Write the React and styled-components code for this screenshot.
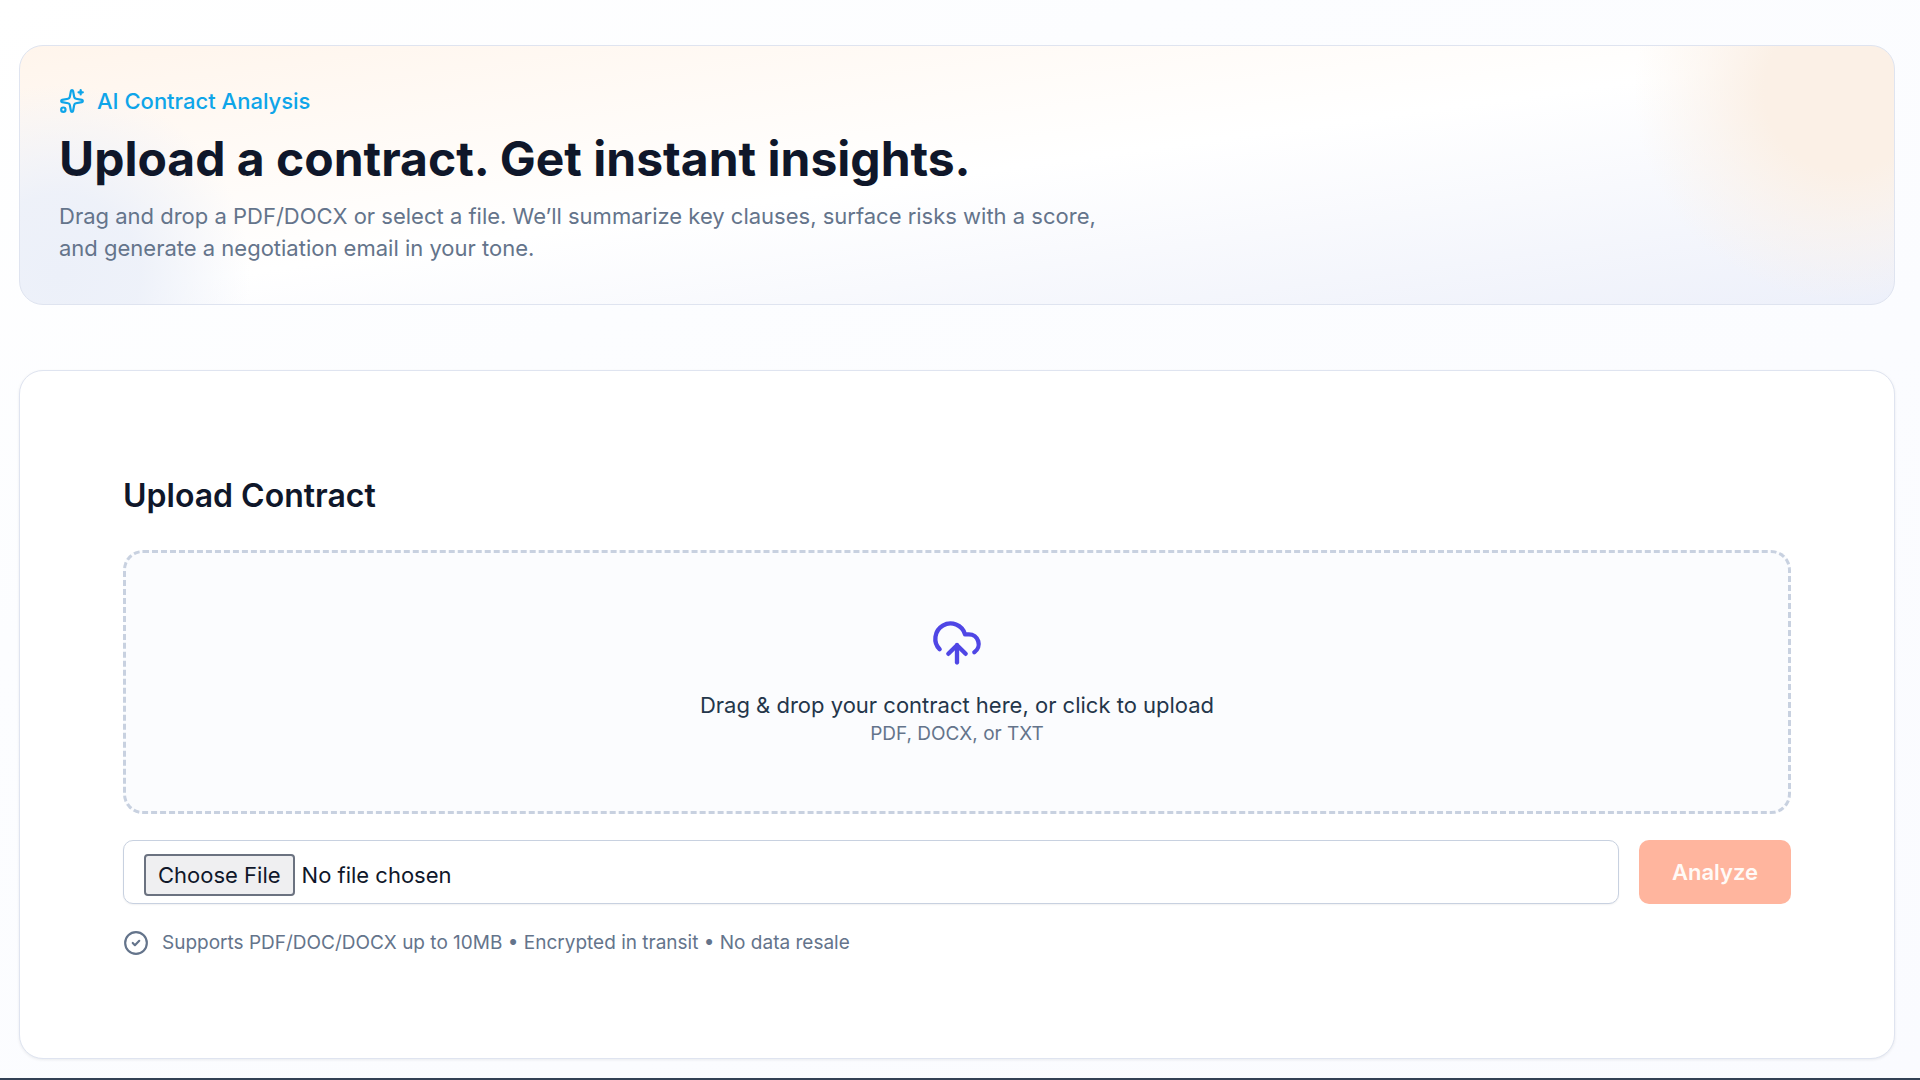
import React, { useState } from 'react'
import styled, { createGlobalStyle } from 'styled-components'
import { CircleCheck, CloudUpload, Sparkles } from 'lucide-react'

const GlobalStyle = createGlobalStyle`
	*, *::before, *::after {
		box-sizing: border-box;
	}

	body {
		margin: 0;
		color: #0f172a;
		font-family: Inter, 'Liberation Sans', sans-serif;
		background: #fcfdff;
	}

	h1, h2, p {
		margin: 0;
	}
`
const Page = styled.div`
	min-height: 100vh;
	display: flex;
	flex-direction: column;
	background: linear-gradient(to bottom right, #ffffff, #fcfdff 30%, #fafbff);
`
const Main = styled.main`
	flex: 1;
	display: flex;
	flex-direction: column;
	gap: 65px;
	padding: 45px 25px 19px 19px;
`
const Hero = styled.section`
	padding: 39px 39px 40px;
	border: 1px solid #dfe4f0;
	border-radius: 24px;
	background:
		radial-gradient(
			circle at calc(100% - 50px) 45px,
			#fbf0e6 0,
			#fbf0e6 80px,
			rgba(251, 240, 230, 0.5) 140px,
			rgba(251, 240, 230, 0) 210px
		),
		radial-gradient(
			circle at 40px calc(100% - 30px),
			#ecf0f9 0,
			rgba(236, 240, 249, 0.9) 80px,
			rgba(236, 240, 249, 0) 190px
		),
		linear-gradient(to bottom right, #fff5ec, #ffffff 50%, #edf0fa);
`
const Eyebrow = styled.p`
	display: flex;
	align-items: center;
	gap: 12px;
	color: #0ea5e9;
	font-size: 22px;
	font-weight: 500;
	line-height: 32px;
`
const Title = styled.h1`
	margin: 16px 0 15px;
	font-size: 48px;
	font-weight: 700;
	line-height: 52px;
`
const Lead = styled.p`
	max-width: 1070px;
	color: #64748b;
	font-size: 22px;
	line-height: 32px;
`
const Card = styled.section`
	padding: 102px 103px;
	border: 1px solid #dfe4f0;
	border-radius: 24px;
	background: #ffffff;
	box-shadow: 0 1px 3px rgba(15, 23, 42, 0.08);
`
const CardTitle = styled.h2`
	margin-bottom: 31px;
	font-size: 32px;
	font-weight: 600;
	line-height: 46px;
`
const DropZone = styled.button`
	width: 100%;
	height: 264px;
	display: flex;
	flex-direction: column;
	align-items: center;
	justify-content: center;
	padding: 0;
	border: 3px dashed #c8d1e0;
	border-radius: 20px;
	background: #fbfcfe;
	color: #24364a;
	font-family: inherit;
	cursor: pointer;

	svg {
		color: #4f46e5;
		margin-bottom: 20px;
	}
`
const DropText = styled.span`
	font-size: 22px;
	line-height: 32px;
`
const DropHint = styled.span`
	color: #64748b;
	font-size: 19px;
	line-height: 26px;
`
const UploadRow = styled.form`
	display: flex;
	gap: 20px;
	margin: 26px 0;
`
const FileInput = styled.input`
	flex: 1;
	min-width: 0;
	height: 64px;
	padding: 13px 20px;
	border: 1px solid #c8d1e0;
	border-radius: 10px;
	background: #ffffff;
	box-shadow: 0 1px 2px rgba(15, 23, 42, 0.06);
	color: #0f172a;
	font-family: inherit;
	font-size: 22px;

	&::file-selector-button {
		height: 42px;
		margin: 0 7px 0 0;
		padding: 0 12px;
		border: 2px solid #6b7280;
		border-radius: 4px;
		background: #efeff1;
		color: #0f172a;
		font-family: inherit;
		font-size: 22px;
	}
`
const AnalyzeButton = styled.button`
	height: 64px;
	padding: 0 33px;
	border: 0;
	border-radius: 10px;
	background: #ffb59e;
	color: #fffaf7;
	font-family: inherit;
	font-size: 22px;
	font-weight: 600;
`
const Note = styled.p`
	display: flex;
	align-items: center;
	gap: 13px;
	color: #64748b;
	font-size: 19px;
	line-height: 26px;
`
const Footer = styled.footer`
	height: 2px;
	background: #334155;
`

const App = () => {
	const [file, setFile] = useState(null)

	const openPicker = () => document.getElementById('contract-file').click()

	return (
		<Page>
			<GlobalStyle />
			<Main>
				<Hero>
					<Eyebrow>
						<Sparkles size={26} />
						AI Contract Analysis
					</Eyebrow>
					<Title>Upload a contract. Get instant insights.</Title>
					<Lead>
						Drag and drop a PDF/DOCX or select a file. We’ll summarize key
						clauses, surface risks with a score, and generate a negotiation
						email in your tone.
					</Lead>
				</Hero>
				<Card>
					<CardTitle>Upload Contract</CardTitle>
					<DropZone type='button' onClick={openPicker}>
						<CloudUpload size={52} />
						<DropText>Drag & drop your contract here, or click to upload</DropText>
						<DropHint>PDF, DOCX, or TXT</DropHint>
					</DropZone>
					<UploadRow onSubmit={(e) => e.preventDefault()}>
						<FileInput
							id='contract-file'
							type='file'
							aria-label='Contract file'
							accept='.pdf,.doc,.docx,.txt'
							onChange={(e) => setFile(e.target.files[0])}
						/>
						<AnalyzeButton type='submit' disabled={!file}>
							Analyze
						</AnalyzeButton>
					</UploadRow>
					<Note>
						<CircleCheck size={26} />
						Supports PDF/DOC/DOCX up to 10MB • Encrypted in transit • No data
						resale
					</Note>
				</Card>
			</Main>
			<Footer />
		</Page>
	)
}

export default App
